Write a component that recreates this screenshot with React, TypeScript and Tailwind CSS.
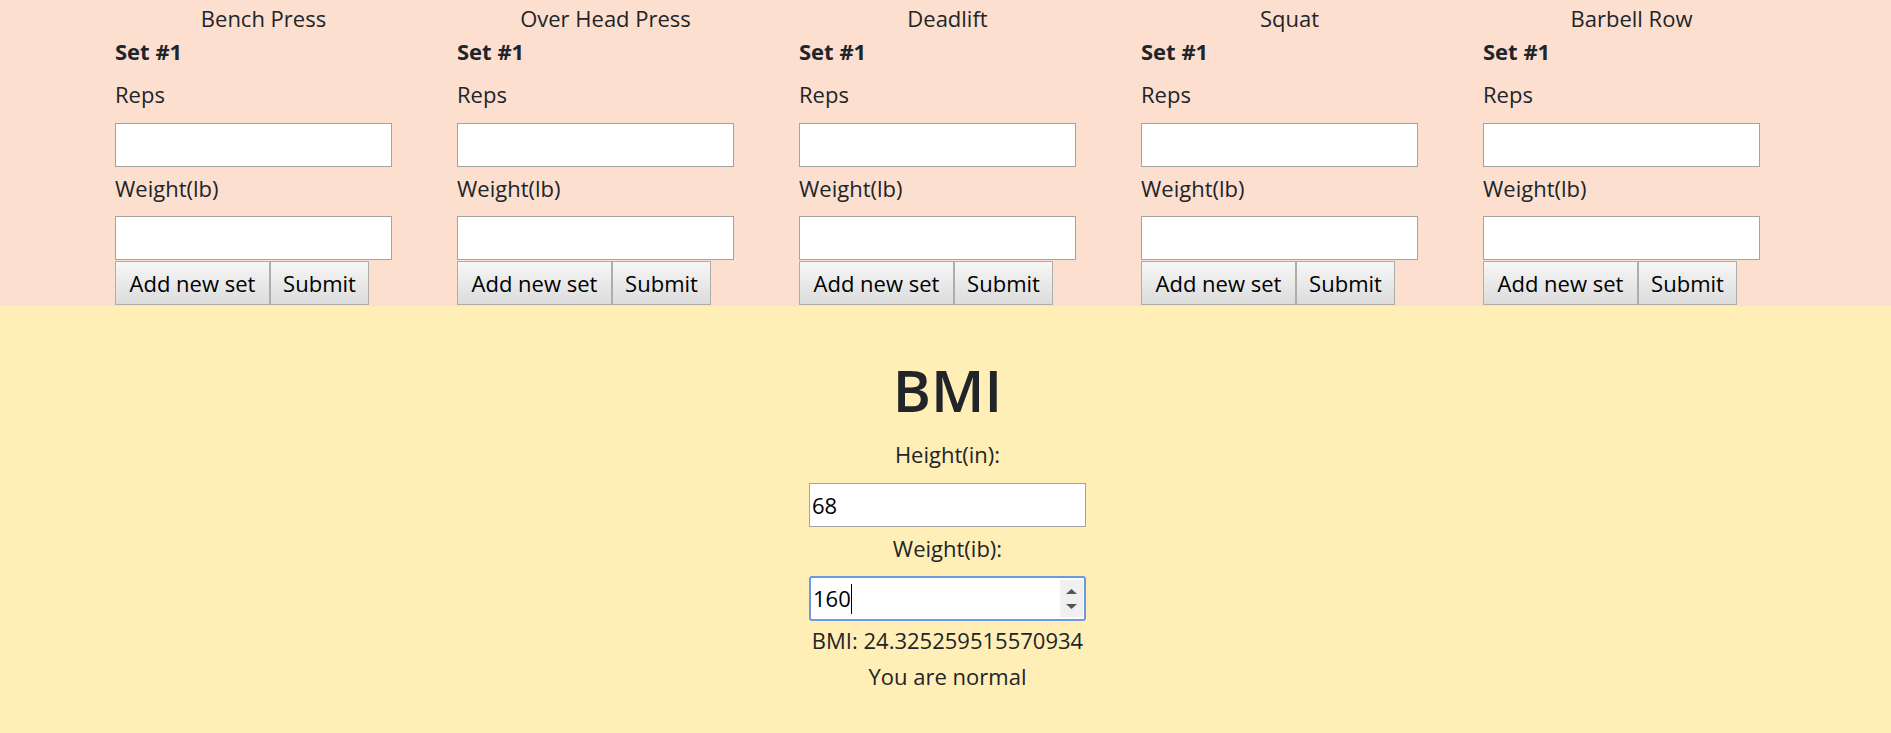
import React from 'react';

const lifts = ['Bench Press', 'Over Head Press', 'Deadlift', 'Squat', 'Barbell Row'];

function LiftCard({ name }: { name: string }) {
  return (
    <div className="w-[297px] shrink-0">
      <div className="text-center leading-[33px]">{name}</div>
      <div className="font-bold leading-[33px]">Set #1</div>
      <label className="block leading-[33px] mt-[10px]">Reps</label>
      <input
        type="text"
        className="block mt-[12px] w-[277px] h-[44px] bg-white border border-[#a3a3a3] px-[3px] outline-none"
      />
      <label className="block leading-[33px] mt-[5px]">Weight(lb)</label>
      <input
        type="text"
        className="block mt-[11px] w-[277px] h-[44px] bg-white border border-[#a3a3a3] px-[3px] outline-none"
      />
      <div className="flex mt-[1px]">
        <button className="w-[155px] h-[44px] border border-[#adadad] bg-gradient-to-b from-[#f7f7f7] to-[#dcdcdc] text-black text-center">
          Add new set
        </button>
        <button className="w-[99px] h-[44px] border border-[#adadad] bg-gradient-to-b from-[#f7f7f7] to-[#dcdcdc] text-black text-center">
          Submit
        </button>
      </div>
    </div>
  );
}

export default function App() {
  return (
    <div
      className="min-h-screen flex flex-col text-[22px] text-[#212529]"
      style={{ fontFamily: '"Open Sans", "Noto Sans", sans-serif' }}
    >
      {/* Workout log */}
      <div className="h-[306px] bg-[#fcdfcf] pt-[2px] pl-[115px] flex gap-[45px]">
        {lifts.map((lift) => (
          <LiftCard key={lift} name={lift} />
        ))}
      </div>

      {/* BMI calculator */}
      <div className="flex-1 bg-[#ffefb6] flex flex-col items-center pt-[48px] pl-[4px]">
        <h1 className="text-[58px] leading-[72px] font-semibold text-[#212529]">BMI</h1>
        <label className="block leading-[33px] mt-[12px]">Height(in):</label>
        <input
          type="text"
          defaultValue="68"
          className="block mt-[12px] w-[277px] h-[44px] bg-white border border-[#a3a3a3] px-[2px] text-black outline-none"
        />
        <label className="block leading-[33px] mt-[5px]">Weight(ib):</label>
        <div className="mt-[11px] w-[277px] h-[45px] bg-white border-2 border-[#6b9ae0] rounded-[3px] flex items-center pl-[2px] pr-[1px] text-black">
          <span>160</span>
          <span className="w-px h-[30px] bg-black" />
          <div className="ml-auto w-[23px] h-[37px] bg-[#f0f0f0] flex flex-col items-center justify-center gap-[10px]">
            <svg width="11" height="5" viewBox="0 0 11 5">
              <path d="M5.5 0 L11 5 L0 5 Z" fill="#555555" />
            </svg>
            <svg width="11" height="5" viewBox="0 0 11 5">
              <path d="M0 0 L11 0 L5.5 5 Z" fill="#555555" />
            </svg>
          </div>
        </div>
        <div className="leading-[33px] mt-[3px]">BMI: 24.325259515570934</div>
        <div className="leading-[33px] mt-[3px]">You are normal</div>
      </div>
    </div>
  );
}
